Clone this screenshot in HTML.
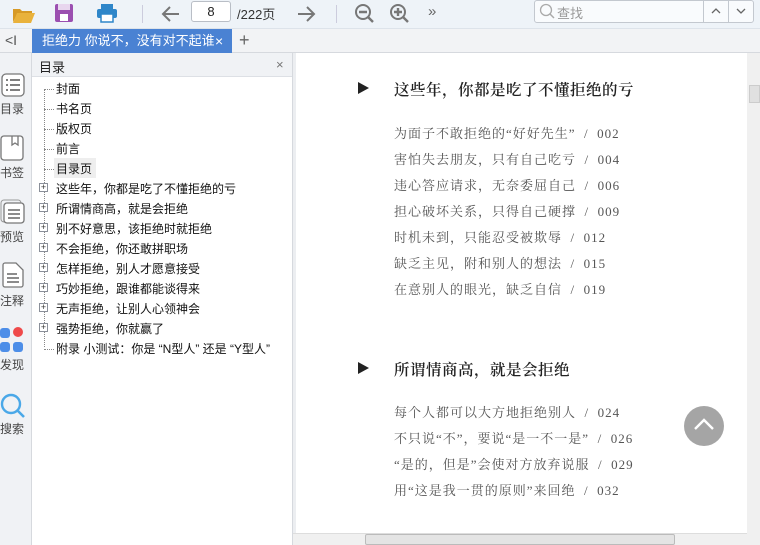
<!DOCTYPE html>
<html><head><meta charset="utf-8"><style>
*{margin:0;padding:0;box-sizing:border-box}
body{width:760px;height:545px;overflow:hidden;position:relative;background:#fff;font-family:"Liberation Sans","Noto Sans CJK SC",sans-serif;font-size:12px;color:#222}
.a{position:absolute}
#tb{left:0;top:0;width:760px;height:29px;background:#eef3f8;border-bottom:1px solid #dde3ea}
#tabs{left:0;top:29px;width:760px;height:24px;background:#f2f3f5;border-bottom:1px solid #d6d9de}
#side{left:0;top:53px;width:32px;height:492px;background:#f0f2f5;border-right:1px solid #d6d9de}
#toc{left:32px;top:53px;width:261px;height:492px;background:#fff;border-right:1px solid #d6d9de}
.si{position:absolute;left:0;width:32px;text-align:center;font-size:12px;color:#444}
.ti{position:absolute;left:24px;font-size:12px;color:#111;white-space:nowrap}
.dl{position:absolute;left:12px;width:10px;border-top:1px dotted #888}
.pl{position:absolute;left:7px;width:9px;height:9px;border:1px solid #8a8f99;background:#fff;font-size:9px;line-height:7px;text-align:center;color:#333}
.it{position:absolute;left:394px;font-size:13px;color:#555;white-space:pre;font-family:"Liberation Serif","Noto Serif CJK SC",serif;letter-spacing:1px}
.h{position:absolute;left:394px;font-size:15.5px;color:#222;white-space:nowrap;font-family:"Liberation Serif","Noto Serif CJK SC",serif;font-weight:600;letter-spacing:0.5px}
.tri{position:absolute;left:358px;width:0;height:0;border-left:11px solid #222;border-top:6px solid transparent;border-bottom:6px solid transparent}
</style></head><body>
<div id="tb" class="a">
 <svg class="a" style="left:12px;top:4px" width="24" height="20"><path d="M1 5h7l2 2h10v2H6L1 18z" fill="#d79a26"/><path d="M5 9h18l-4 10H1z" fill="#e9b23c"/></svg>
 <svg class="a" style="left:54px;top:3px" width="20" height="20"><rect x="1" y="1" width="18" height="18" rx="2" fill="#9b4fb0"/><rect x="4" y="1" width="12" height="6" fill="#e8d6ee"/><rect x="6" y="11" width="8" height="7" fill="#fff"/></svg>
 <svg class="a" style="left:96px;top:3px" width="22" height="20"><rect x="5" y="1" width="12" height="5" fill="#2f86c9"/><rect x="1" y="6" width="20" height="9" rx="2" fill="#2f86c9"/><rect x="5" y="11" width="12" height="8" fill="#fff" stroke="#2f86c9" stroke-width="1.5"/></svg>
 <div class="a" style="left:142px;top:5px;width:1px;height:18px;background:#ccd"></div>
 <svg class="a" style="left:161px;top:4px" width="20" height="20"><path d="M18 10H3M9 3l-7 7 7 7" stroke="#777" stroke-width="2" fill="none"/></svg>
 <div class="a" style="left:191px;top:1px;width:40px;height:21px;border:1px solid #b9bec6;border-radius:3px;background:#fff;text-align:center;line-height:19px;font-size:13px">8</div>
 <div class="a" style="left:237px;top:4px;font-size:13px;color:#333">/222页</div>
 <svg class="a" style="left:296px;top:4px" width="20" height="20"><path d="M2 10h15M11 3l7 7-7 7" stroke="#777" stroke-width="2" fill="none"/></svg>
 <div class="a" style="left:336px;top:5px;width:1px;height:18px;background:#ccd"></div>
 <svg class="a" style="left:354px;top:3px" width="22" height="22"><circle cx="9" cy="9" r="7" stroke="#777" stroke-width="2" fill="none"/><path d="M5 9h8M14 14l5 5" stroke="#777" stroke-width="2.4"/></svg>
 <svg class="a" style="left:389px;top:3px" width="22" height="22"><circle cx="9" cy="9" r="7" stroke="#777" stroke-width="2" fill="none"/><path d="M5 9h8M9 5v8M14 14l5 5" stroke="#777" stroke-width="2.4"/></svg>
 <div class="a" style="left:428px;top:3px;font-size:15px;color:#666">»</div>
 <div class="a" style="left:534px;top:0;width:220px;height:23px;border:1px solid #c3c8cf;border-radius:3px;background:#f9fbfd"></div>
 <svg class="a" style="left:539px;top:3px" width="16" height="16"><circle cx="7" cy="7" r="5.5" stroke="#aaa" fill="none" stroke-width="1.3"/><path d="M11 11l4 4" stroke="#aaa" stroke-width="1.5"/></svg>
 <div class="a" style="left:557px;top:3px;font-size:13px;color:#999">查找</div>
 <div class="a" style="left:703px;top:0;width:1px;height:23px;background:#c3c8cf"></div>
 <div class="a" style="left:728px;top:0;width:1px;height:23px;background:#c3c8cf"></div>
 <svg class="a" style="left:710px;top:7px" width="12" height="8"><path d="M2 6l4-4 4 4" stroke="#666" fill="none" stroke-width="1.3"/></svg>
 <svg class="a" style="left:735px;top:7px" width="12" height="8"><path d="M2 2l4 4 4-4" stroke="#666" fill="none" stroke-width="1.3"/></svg>
</div>
<div id="tabs" class="a">
 <div class="a" style="left:5px;top:3px;font-size:14px;color:#555">&lt;I</div>
 <div class="a" style="left:32px;top:0;width:200px;height:24px;background:#4a82d3;color:#fff;font-size:13px;line-height:24px;padding-left:10px;white-space:nowrap;overflow:hidden"><span style="display:inline-block;width:172px;overflow:hidden;vertical-align:top">拒绝力 你说不，没有对不起谁_</span></div>
 <div class="a" style="left:215px;top:4px;color:#fff;font-size:14px">×</div>
 <div class="a" style="left:239px;top:1px;color:#666;font-size:18px">+</div>
</div>
<div id="side" class="a">
 <svg class="a" style="left:1px;top:20px" width="24" height="24"><rect x="1" y="1" width="22" height="22" rx="4" stroke="#777" fill="#fff" stroke-width="1.3"/><path d="M5 7h2M9 7h10M5 12h2M9 12h10M5 17h2M9 17h10" stroke="#555" stroke-width="1.6"/></svg>
 <div class="si" style="top:47px;left:-4px">目录</div>
 <svg class="a" style="left:0;top:82px" width="24" height="26"><rect x="1" y="1" width="22" height="24" rx="3" stroke="#777" fill="#fff" stroke-width="1.3"/><path d="M12 1v9l3-2 3 2V1" stroke="#777" fill="none" stroke-width="1.3"/></svg>
 <div class="si" style="top:111px;left:-4px">书签</div>
 <svg class="a" style="left:0;top:146px" width="26" height="26"><rect x="1" y="1" width="20" height="22" rx="3" stroke="#999" fill="#f0f2f5"/><rect x="4" y="4" width="20" height="20" rx="3" stroke="#777" fill="#fff" stroke-width="1.3"/><path d="M8 11h12M8 15h12M8 19h12" stroke="#666" stroke-width="1.4"/></svg>
 <div class="si" style="top:175px;left:-4px">预览</div>
 <svg class="a" style="left:1px;top:209px" width="24" height="26"><path d="M2 3a2 2 0 0 1 2-2h11l7 7v15a2 2 0 0 1-2 2H4a2 2 0 0 1-2-2z" stroke="#777" fill="#fff" stroke-width="1.3"/><path d="M6 12h10M6 16h12M6 20h12" stroke="#666" stroke-width="1.4"/></svg>
 <div class="si" style="top:239px;left:-4px">注释</div>
 <div class="a" style="left:0;top:275px;width:10px;height:10px;border-radius:3px;background:#4d8ee8"></div>
 <div class="a" style="left:13px;top:274px;width:10px;height:10px;border-radius:5px;background:#ef4a4a"></div>
 <div class="a" style="left:0;top:289px;width:10px;height:10px;border-radius:3px;background:#4d8ee8"></div>
 <div class="a" style="left:13px;top:289px;width:10px;height:10px;border-radius:3px;background:#4d8ee8"></div>
 <div class="si" style="top:303px;left:-4px">发现</div>
 <svg class="a" style="left:0;top:340px" width="26" height="26"><circle cx="11" cy="11" r="9" stroke="#4aa8e8" stroke-width="2.4" fill="none"/><path d="M18 18l6 6" stroke="#4aa8e8" stroke-width="2.6"/></svg>
 <div class="si" style="top:367px;left:-4px">搜索</div>
</div>
<div id="toc" class="a">
 <div class="a" style="left:0;top:0;width:260px;height:24px;background:#f0f2f5;border-bottom:1px solid #dde0e5"></div>
 <div class="a" style="left:7px;top:4px;font-size:13px">目录</div>
 <div class="a" style="left:244px;top:4px;font-size:13px;color:#777">×</div>
 <div class="a" style="left:12px;top:36px;height:258px;border-left:1px dotted #888"></div>
 <div class="a" style="left:22px;top:105px;width:42px;height:20px;background:#eeeeee"></div>
 <div class="dl" style="top:36px"></div><div class="dl" style="top:56px"></div><div class="dl" style="top:76px"></div><div class="dl" style="top:96px"></div><div class="dl" style="top:116px"></div><div class="dl" style="top:296px"></div>
 <div class="ti" style="top:27px">封面</div>
 <div class="ti" style="top:47px">书名页</div>
 <div class="ti" style="top:67px">版权页</div>
 <div class="ti" style="top:87px">前言</div>
 <div class="ti" style="top:107px">目录页</div>
 <div class="ti" style="top:127px">这些年，你都是吃了不懂拒绝的亏</div>
 <div class="ti" style="top:147px">所谓情商高，就是会拒绝</div>
 <div class="ti" style="top:167px">别不好意思，该拒绝时就拒绝</div>
 <div class="ti" style="top:187px">不会拒绝，你还敢拼职场</div>
 <div class="ti" style="top:207px">怎样拒绝，别人才愿意接受</div>
 <div class="ti" style="top:227px">巧妙拒绝，跟谁都能谈得来</div>
 <div class="ti" style="top:247px">无声拒绝，让别人心领神会</div>
 <div class="ti" style="top:267px">强势拒绝，你就赢了</div>
 <div class="ti" style="top:287px">附录 小测试：你是 “N型人” 还是 “Y型人”</div>
 <div class="pl" style="top:130px">+</div><div class="pl" style="top:150px">+</div><div class="pl" style="top:170px">+</div><div class="pl" style="top:190px">+</div><div class="pl" style="top:210px">+</div><div class="pl" style="top:230px">+</div><div class="pl" style="top:250px">+</div><div class="pl" style="top:270px">+</div>
</div>
<div class="a" style="left:293px;top:53px;width:3px;height:480px;background:#eceef1"></div>
<div class="a" style="left:747px;top:53px;width:13px;height:492px;background:#f0f0f0"></div>
<div class="a" style="left:749px;top:85px;width:11px;height:18px;background:#e0e0e0;border:1px solid #ccc"></div>
<div class="a" style="left:293px;top:533px;width:454px;height:12px;background:#f0f0f0;border-top:1px solid #ddd"></div>
<div class="a" style="left:365px;top:534px;width:310px;height:11px;background:#e4e4e4;border:1px solid #bbb;border-radius:2px"></div>
<div class="tri" style="top:82px"></div>
<div class="h" style="top:78px">这些年，你都是吃了不懂拒绝的亏</div>
<div class="it" style="top:123px">为面子不敢拒绝的“好好先生”  /  002</div>
<div class="it" style="top:149px">害怕失去朋友，只有自己吃亏  /  004</div>
<div class="it" style="top:175px">违心答应请求，无奈委屈自己  /  006</div>
<div class="it" style="top:201px">担心破坏关系，只得自己硬撑  /  009</div>
<div class="it" style="top:227px">时机未到，只能忍受被欺辱  /  012</div>
<div class="it" style="top:253px">缺乏主见，附和别人的想法  /  015</div>
<div class="it" style="top:279px">在意别人的眼光，缺乏自信  /  019</div>
<div class="tri" style="top:362px"></div>
<div class="h" style="top:358px">所谓情商高，就是会拒绝</div>
<div class="it" style="top:402px">每个人都可以大方地拒绝别人  /  024</div>
<div class="it" style="top:428px">不只说“不”，要说“是一不一是”  /  026</div>
<div class="it" style="top:454px">“是的，但是”会使对方放弃说服  /  029</div>
<div class="it" style="top:480px">用“这是我一贯的原则”来回绝  /  032</div>
<div class="a" style="left:684px;top:406px;width:40px;height:40px;border-radius:20px;background:#a5a5a5"></div>
<svg class="a" style="left:692px;top:416px" width="24" height="16"><path d="M3 13l9-9 9 9" stroke="#fff" stroke-width="2.4" fill="none"/></svg>
</body></html>
